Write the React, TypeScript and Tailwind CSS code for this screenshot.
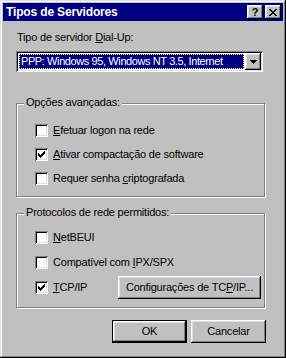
import React from "react";

const raised =
  "shadow-[inset_-1px_-1px_#000,inset_1px_1px_#fff,inset_-2px_-2px_#808080,inset_2px_2px_#dfdfdf]";
const sunken =
  "shadow-[inset_1px_1px_#808080,inset_-1px_-1px_#fff,inset_2px_2px_#000,inset_-2px_-2px_#dfdfdf]";

function Check() {
  const px: [number, number][] = [
    [6, 0],
    [5, 1], [6, 1],
    [0, 2], [4, 2], [5, 2], [6, 2],
    [0, 3], [1, 3], [3, 3], [4, 3], [5, 3],
    [0, 4], [1, 4], [2, 4], [3, 4], [4, 4],
    [1, 5], [2, 5], [3, 5],
    [2, 6],
  ];
  return (
    <svg width="7" height="7" viewBox="0 0 7 7" shapeRendering="crispEdges">
      {px.map(([x, y]) => (
        <rect key={`${x}-${y}`} x={x} y={y} width="1" height="1" fill="#000" />
      ))}
    </svg>
  );
}

function Checkbox({ checked, children, h }: { checked?: boolean; children: React.ReactNode; h: string }) {
  return (
    <div className={`flex items-center ${h}`}>
      <div className={`w-[13px] h-[13px] bg-white ${sunken} flex items-center justify-center shrink-0`}>
        {checked ? <Check /> : null}
      </div>
      <span className="ml-[5px] whitespace-nowrap">{children}</span>
    </div>
  );
}

function Group({ label, children, pt, h }: { label: string; children: React.ReactNode; pt: string; h: string }) {
  return (
    <div className={`relative border border-[#808080] shadow-[1px_1px_0_#fff,inset_1px_1px_0_#fff] ${h} ${pt} pl-[18px]`}>
      <span className="absolute -top-[8px] left-[7px] px-[2px] bg-[#c0c0c0] leading-[13px] whitespace-nowrap">
        {label}
      </span>
      {children}
    </div>
  );
}

export default function App() {
  return (
    <div
      className={`w-[286px] h-[358px] bg-[#c0c0c0] p-[3px] flex flex-col text-black text-[11px] leading-[13px] tracking-[-0.2px] shadow-[inset_-1px_-1px_#000,inset_1px_1px_#dfdfdf,inset_-2px_-2px_#808080,inset_2px_2px_#fff]`}
      style={{ fontFamily: '"Liberation Sans", Arial, sans-serif' }}
    >
      {/* Title bar */}
      <div className="h-[18px] bg-[#000080] flex items-center pl-[3px] pr-[2px]">
        <span className="text-white font-bold text-[12px] tracking-[-0.15px] leading-[14px] flex-1">
          Tipos de Servidores
        </span>
        <div className={`w-[16px] h-[14px] bg-[#c0c0c0] ${raised} flex items-center justify-center font-bold text-[11px] leading-none`}>
          ?
        </div>
        <div className={`ml-[2px] w-[16px] h-[14px] bg-[#c0c0c0] ${raised} flex items-center justify-center`}>
          <svg width="8" height="7" viewBox="0 0 8 7" shapeRendering="crispEdges">
            <path d="M0 0h2v1h-2zM6 0h2v1h-2zM1 1h2v1h-2zM5 1h2v1h-2zM2 2h4v1h-4zM3 3h2v1h-2zM2 4h4v1h-4zM1 5h2v1h-2zM5 5h2v1h-2zM0 6h2v1h-2zM6 6h2v1h-2z" fill="#000" />
          </svg>
        </div>
      </div>

      {/* Content */}
      <div className="ml-[13px] mr-[18px] flex flex-col">
        <div className="mt-[10px] pl-[1px]">
          Tipo de servidor <u>D</u>ial-Up:
        </div>

        {/* Combobox */}
        <div className={`mt-[7px] w-[247px] h-[21px] bg-white ${sunken} p-[2px] flex`}>
          <div className="flex-1 bg-[#000080] m-[1px] mr-0 outline-1 outline-dotted outline-[#ffff80] -outline-offset-1 text-white flex items-center pl-[2px] tracking-[-0.4px] whitespace-nowrap overflow-hidden">
            PPP: Windows 95, Windows NT 3.5, Internet
          </div>
          <div className={`ml-[1px] w-[16px] h-[17px] bg-[#c0c0c0] ${raised} flex items-center justify-center`}>
            <svg width="7" height="4" viewBox="0 0 7 4" shapeRendering="crispEdges">
              <path d="M0 0h7v1h-7zM1 1h5v1h-5zM2 2h3v1h-3zM3 3h1v1h-1z" fill="#000" />
            </svg>
          </div>
        </div>

        {/* Group 1 */}
        <div className="mt-[31px]">
          <Group label="Opções avançadas:" pt="pt-[14px]" h="h-[94px]">
            <Checkbox h="h-[24px]"><u>E</u>fetuar logon na rede</Checkbox>
            <Checkbox h="h-[24px]" checked><u>A</u>tivar compactação de software</Checkbox>
            <Checkbox h="h-[24px]">Requer senha <u>c</u>riptografada</Checkbox>
          </Group>
        </div>

        {/* Group 2 */}
        <div className="mt-[16px]">
          <Group label="Protocolos de rede permitidos:" pt="pt-[11px]" h="h-[95px]">
            <Checkbox h="h-[25px]"><u>N</u>etBEUI</Checkbox>
            <Checkbox h="h-[25px]">Compatível com <u>I</u>PX/SPX</Checkbox>
            <div className="flex items-center h-[25px]">
              <Checkbox h="h-[25px]" checked><u>T</u>CP/IP</Checkbox>
              <div className={`ml-auto mr-[3px] w-[143px] h-[23px] ${raised} flex items-center justify-center whitespace-nowrap`}>
                Configurações de TC<u>P</u>/IP...
              </div>
            </div>
          </Group>
        </div>

        {/* Buttons */}
        <div className="mt-[12px] flex justify-end gap-[4px] mr-[-1px]">
          <div className="w-[75px] h-[23px] border border-black">
            <div className={`w-full h-full ${raised} flex items-center justify-center`}>OK</div>
          </div>
          <div className={`w-[75px] h-[23px] ${raised} flex items-center justify-center`}>Cancelar</div>
        </div>
      </div>
    </div>
  );
}
